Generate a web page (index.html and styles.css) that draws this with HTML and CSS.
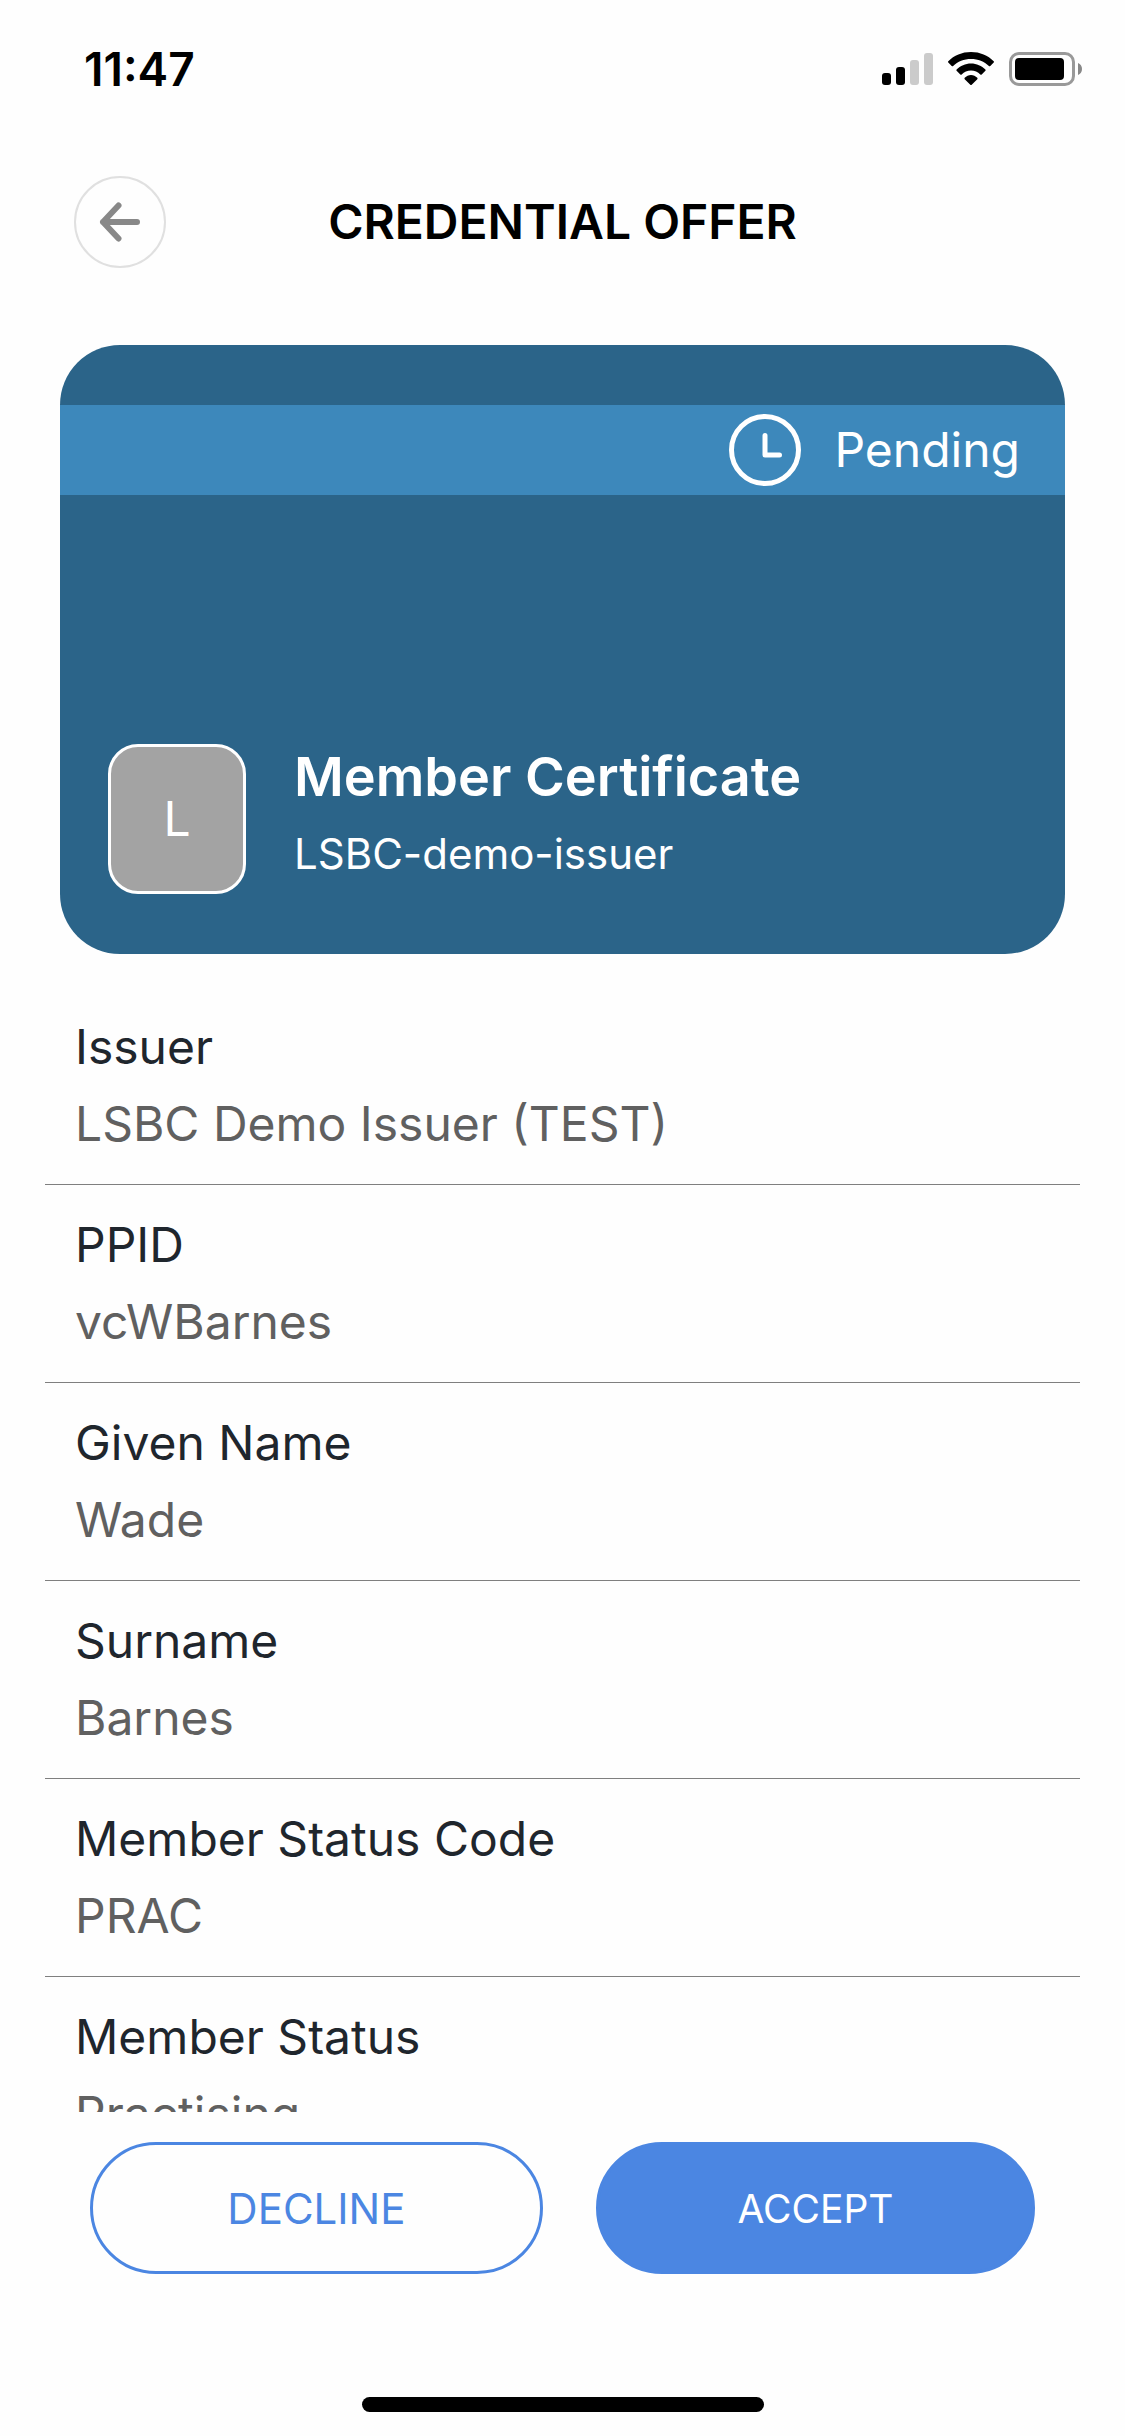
FILE: index.html
```html
<!DOCTYPE html>
<html lang="en">
<head>
  <meta charset="utf-8">
  <meta name="viewport" content="width=device-width, initial-scale=1">
  <title>Credential Offer</title>
  <link rel="stylesheet" href="styles.css">
</head>
<body>
  <div class="app">
    <div class="status-bar">
      <span class="status-time">11:47</span>
      <div class="status-icons">
        <svg width="51" height="34" viewBox="0 0 51 34" aria-hidden="true">
          <rect x="0" y="21" width="9" height="12" rx="3"/>
          <rect x="14" y="15" width="9" height="18" rx="3"/>
          <rect x="28" y="8" width="9" height="25" rx="3" fill="#cbcbcb"/>
          <rect x="42" y="1" width="9" height="32" rx="3" fill="#cbcbcb"/>
        </svg>
        <svg width="46" height="34" viewBox="0 0 46 34" aria-hidden="true">
          <path d="M0.3 9.2C6 3.4 14 0 23 0s17 3.4 22.7 9.2c.4.4.4 1 0 1.400L42.300 14c-.4.4-1 .4-1.400 0C36.300 9.600 30 7 23 7S9.700 9.600 5.100 14c-.4.4-1 .4-1.400 0L.3 10.600c-.4-.4-.4-1 0-1.400z"/>
          <path d="M8.600 17.400C12.300 13.900 17.400 11.500 23 11.500s10.700 2.400 14.400 5.900c.4.4.4 1 0 1.400l-3.700 3.600c-.4.4-1 .4-1.400 0C29.900 20.200 26.600 18.500 23 18.500s-6.900 1.700-9.300 3.900c-.4.4-1 .4-1.400 0l-3.700-3.600c-.4-.4-.4-1 0-1.400z"/>
          <path d="M16.700 25.800C18.400 24.100 20.600 23 23 23s4.600 1.100 6.300 2.800c.4.4.4 1 0 1.400l-5.600 5.500c-.4.4-1 .4-1.400 0l-5.600-5.500c-.4-.4-.4-1 0-1.400z"/>
        </svg>
        <svg width="73" height="34" viewBox="0 0 73 34" aria-hidden="true">
          <rect x="1.500" y="1.500" width="63" height="31" rx="8.500" fill="none" stroke="#999" stroke-width="3"/>
          <rect x="6" y="6" width="49" height="22" rx="4"/>
          <path d="M69 11c2.500 1 4 3.300 4 6s-1.500 5-4 6z" fill="#888"/>
        </svg>
      </div>
    </div>

    <header class="header">
      <button class="back" type="button" aria-label="Back">
        <svg width="42" height="42" viewBox="0 0 42 42" aria-hidden="true">
          <path d="M38 21H4M19.500 4.500L4 21l15.500 16.500" fill="none" stroke="#888" stroke-width="6" stroke-linecap="round" stroke-linejoin="round"/>
        </svg>
      </button>
      <h1 class="title">CREDENTIAL OFFER</h1>
    </header>

    <main class="content">
      <section class="card">
        <div class="card-status">
          <svg width="72" height="72" viewBox="0 0 72 72" fill="none" stroke="#fff" stroke-width="5" aria-hidden="true">
            <circle cx="36" cy="36" r="33.500"/>
            <path d="M36 21.500V41h14.500" stroke-linecap="round" stroke-linejoin="round"/>
          </svg>
          <span>Pending</span>
        </div>
        <div class="card-body">
          <div class="logo">L</div>
          <div class="card-text">
            <h2 class="card-name">Member Certificate</h2>
            <p class="card-issuer">LSBC-demo-issuer</p>
          </div>
        </div>
      </section>

      <dl class="attributes">
        <div class="attribute"><dt>Issuer</dt><dd>LSBC Demo Issuer (TEST)</dd></div>
        <div class="attribute"><dt>PPID</dt><dd>vcWBarnes</dd></div>
        <div class="attribute"><dt>Given Name</dt><dd>Wade</dd></div>
        <div class="attribute"><dt>Surname</dt><dd>Barnes</dd></div>
        <div class="attribute"><dt>Member Status Code</dt><dd>PRAC</dd></div>
        <div class="attribute"><dt>Member Status</dt><dd>Practising</dd></div>
      </dl>
    </main>

    <footer class="actions">
      <button class="btn btn-outline" type="button">DECLINE</button>
      <button class="btn btn-solid" type="button">ACCEPT</button>
    </footer>
    <div class="home-indicator"></div>
  </div>
</body>
</html>
```
FILE: styles.css
```css
* {
  box-sizing: border-box;
}

body,
h1,
h2,
p,
dl,
dd {
  margin: 0;
}

body {
  background: #fefefe;
  color: #000;
  font-family: Inter, "Liberation Sans", sans-serif;
  font-size: 48px;
  line-height: 58px;
}

svg {
  display: block;
  flex: none;
}

.app {
  display: flex;
  flex-direction: column;
  height: 100vh;
}

.status-bar {
  display: flex;
  align-items: center;
  justify-content: space-between;
  padding: 40px 43px 34px 84px;
}

.status-time {
  font-size: 46px;
  font-weight: 600;
}

.status-icons {
  display: flex;
  gap: 15px;
}

.header {
  display: grid;
  grid-template-columns: 92px 1fr 92px;
  align-items: center;
  padding: 44px 74px 77px;
}

.back {
  display: flex;
  align-items: center;
  justify-content: center;
  width: 92px;
  height: 92px;
  padding: 0;
  border: 2px solid #e0e0e0;
  border-radius: 50%;
  background: none;
}

.title {
  font-size: 48px;
  font-weight: 600;
  text-align: center;
}

.content {
  flex: 1;
  min-height: 0;
  overflow: hidden;
}

.card {
  margin: 0 60px 33px;
  padding: 60px 0;
  border-radius: 60px;
  background: #2b6489;
  color: #fff;
}

.card-status {
  display: flex;
  align-items: center;
  justify-content: flex-end;
  gap: 33px;
  height: 90px;
  padding-right: 45px;
  background: #3d88bb;
}

.card-body {
  display: flex;
  align-items: center;
  gap: 48px;
  padding: 249px 48px 0;
}

.logo {
  display: flex;
  align-items: center;
  justify-content: center;
  width: 138px;
  height: 150px;
  border: 3px solid #fff;
  border-radius: 30px;
  background: #a3a3a3;
}

.card-text {
  display: flex;
  flex-direction: column;
  gap: 19px;
  padding-bottom: 8px;
}

.card-name {
  font-size: 54px;
  font-weight: 600;
}

.card-issuer {
  font-size: 42px;
}

.attributes {
  margin: 0 45px;
}

.attribute {
  display: flex;
  flex-direction: column;
  gap: 19px;
  padding: 31px 30px;
  border-bottom: 1px solid #7f7f7f;
}

.attribute dt {
  color: #1f262d;
}

.attribute dd {
  color: #606060;
}

.actions {
  display: grid;
  grid-template-columns: 33fr 32fr;
  gap: 53px;
  padding: 30px 90px 123px;
}

.btn {
  height: 132px;
  border: 3px solid #4b86e2;
  border-radius: 66px;
  font-family: inherit;
}

.btn-outline {
  background: none;
  color: #4b86e2;
  font-size: 42px;
}

.btn-solid {
  background: #4b86e2;
  color: #fff;
  font-size: 39px;
}

.home-indicator {
  align-self: center;
  width: 402px;
  height: 15px;
  margin-bottom: 24px;
  border-radius: 8px;
  background: #000;
}
```
